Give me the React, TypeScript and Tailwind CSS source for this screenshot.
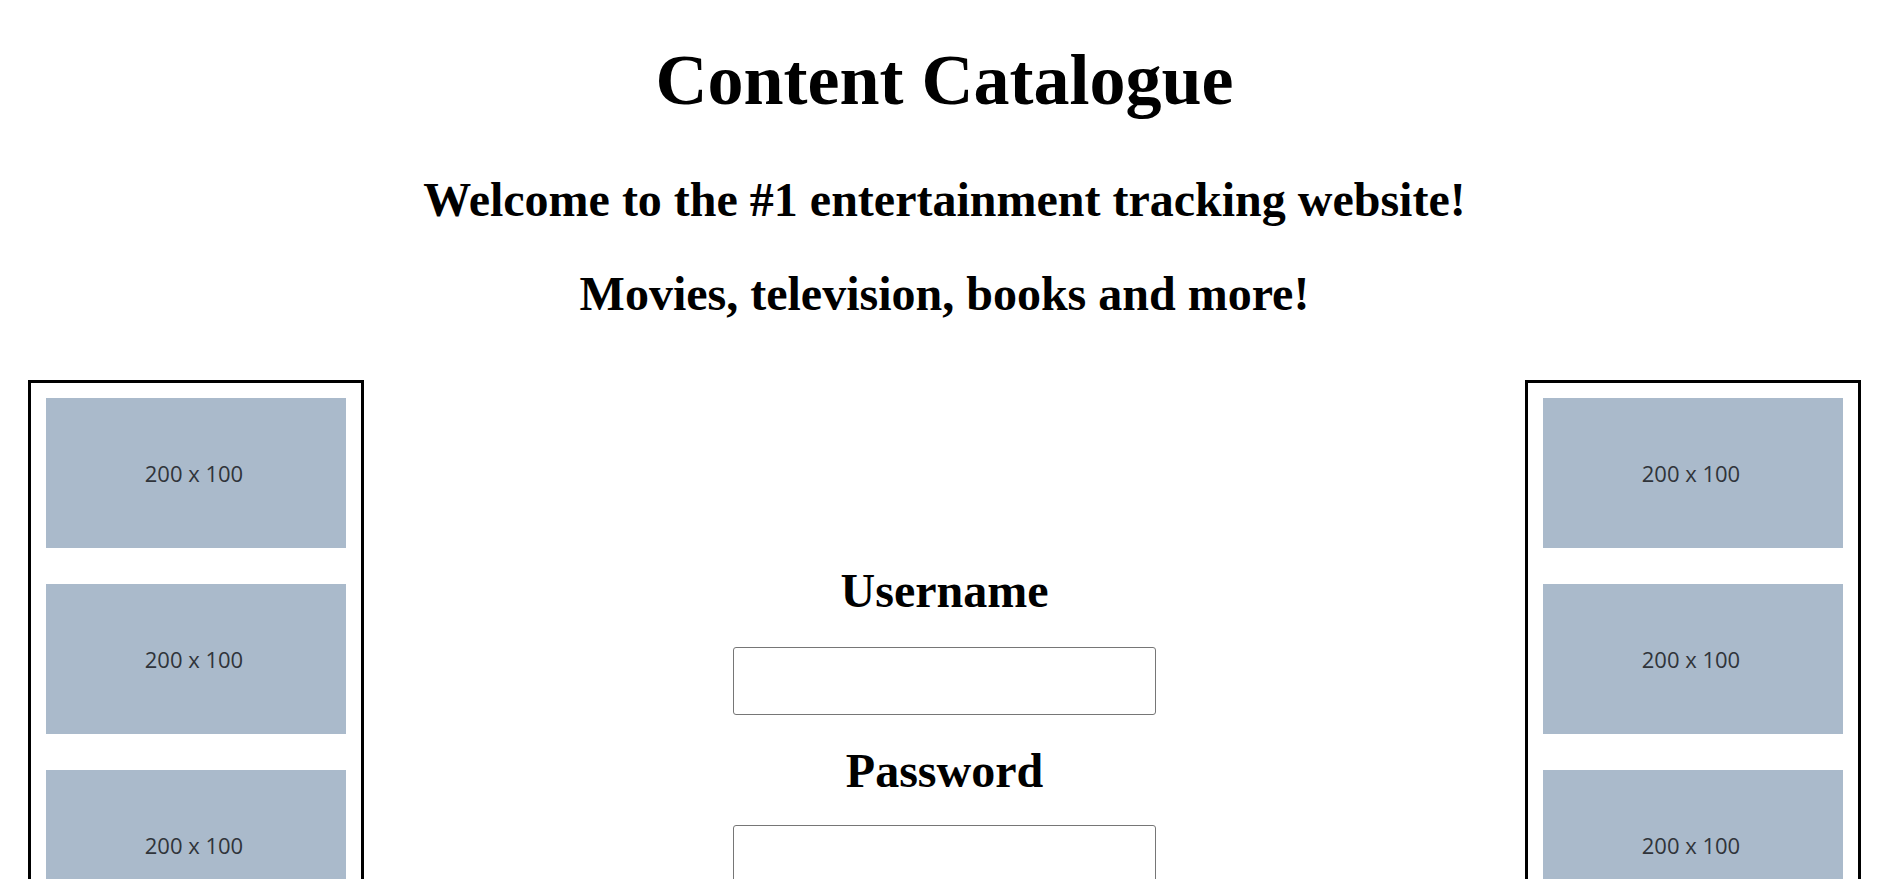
import React from "react";

function Placeholder() {
  return (
    <div className="w-[300px] h-[150px] shrink-0 bg-[#aabacb] flex items-center justify-center pr-1">
      <span className="text-[22px] leading-none text-[#30343a] [font-family:'Open_Sans',sans-serif]">
        200 x 100
      </span>
    </div>
  );
}

function SideBox() {
  return (
    <div className="w-[336px] shrink-0 border-[3px] border-black pt-[15px] pl-[15px] flex flex-col gap-[36px] h-[700px] overflow-hidden">
      <Placeholder />
      <Placeholder />
      <Placeholder />
      <Placeholder />
    </div>
  );
}

export default function App() {
  return (
    <div className="h-screen overflow-hidden bg-white text-black [font-family:'Liberation_Serif','Times_New_Roman',serif]">
      <div className="pl-[5px]">
        <h1 className="mt-[40px] text-center text-[72px] leading-[80px] font-bold">Content Catalogue</h1>
        <h2 className="mt-[53px] text-center text-[48px] leading-[53px] font-bold">
          Welcome to the #1 entertainment tracking website!
        </h2>
        <h2 className="mt-[41px] text-center text-[48px] leading-[53px] font-bold">
          Movies, television, books and more!
        </h2>
      </div>
      <div className="mt-[60px] flex pl-[28px] pr-[23px]">
        <SideBox />
        <div className="flex-1 flex flex-col items-center pt-[184px]">
          <h2 className="text-[48px] leading-[53px] font-bold">Username</h2>
          <input
            type="text"
            className="mt-[30px] w-[423px] h-[68px] border border-[#767676] rounded-[3px] bg-white"
          />
          <h2 className="mt-[29px] text-[48px] leading-[53px] font-bold">Password</h2>
          <input
            type="password"
            className="mt-[28px] w-[423px] h-[68px] border border-[#767676] rounded-[3px] bg-white"
          />
        </div>
        <SideBox />
      </div>
    </div>
  );
}
